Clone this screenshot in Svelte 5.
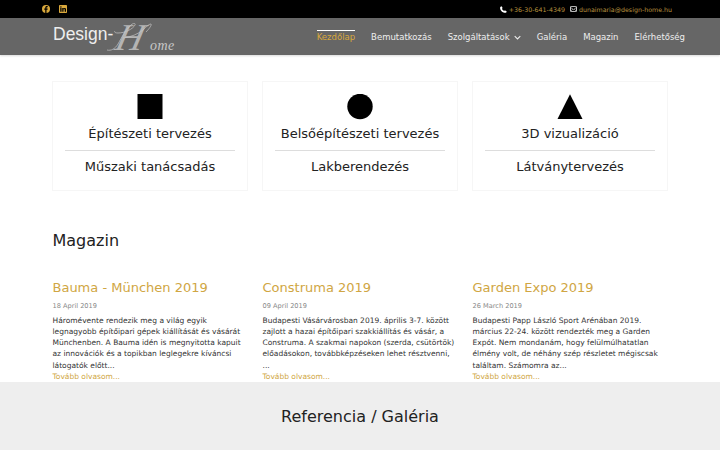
<script>
	const services = [
		{ shape: 'square', title: 'Építészeti tervezés', sub: 'Műszaki tanácsadás' },
		{ shape: 'circle', title: 'Belsőépítészeti tervezés', sub: 'Lakberendezés' },
		{ shape: 'triangle', title: '3D vizualizáció', sub: 'Látványtervezés' }
	];

	const articles = [
		{
			title: 'Bauma - München 2019',
			date: '18 April 2019',
			lines: [
				'Háromévente rendezik meg a világ egyik',
				'legnagyobb építőipari gépek kiállítását és vásárát',
				'Münchenben. A Bauma idén is megnyitotta kapuit',
				'az innovációk és a topikban leglegekre kíváncsi',
				'látogatók előtt...'
			]
		},
		{
			title: 'Construma 2019',
			date: '09 April 2019',
			lines: [
				'Budapesti Vásárvárosban 2019. április 3-7. között',
				'zajlott a hazai építőipari szakkiállítás és vásár, a',
				'Construma. A szakmai napokon (szerda, csütörtök)',
				'előadásokon, továbbképzéseken lehet résztvenni,',
				'...'
			]
		},
		{
			title: 'Garden Expo 2019',
			date: '26 March 2019',
			lines: [
				'Budapesti Papp László Sport Arénában 2019.',
				'március 22-24. között rendezték meg a Garden',
				'Expót. Nem mondanám, hogy felülmúlhatatlan',
				'élmény volt, de néhány szép részletet mégiscsak',
				'találtam. Számomra az...'
			]
		}
	];

	const menu = ['Bemutatkozás', 'Szolgáltatások', 'Galéria', 'Magazin', 'Elérhetőség'];
</script>

<div class="page">
	<div class="topbar">
		<div class="social">
			<svg class="soc" viewBox="0 0 16 16" width="8" height="8">
				<circle cx="8" cy="8" r="8" fill="#d9a83c" />
				<path d="M9 16V9.500h2l.4-2.500H9V5.600c0-.8.3-1.200 1.200-1.200h1.200V2.200C11 2.100 10.300 2 9.600 2 7.700 2 6.500 3.100 6.500 5.200V7H4.500v2.500h2V16z" fill="#000" />
			</svg>
			<svg class="soc" viewBox="0 0 16 16" width="8" height="8">
				<rect width="16" height="16" rx="1.500" fill="#d9a83c" />
				<path d="M2.500 6h2.600v7.500H2.500zM3.800 2.500a1.500 1.500 0 1 1 0 3 1.500 1.500 0 0 1 0-3zM6.500 6H9v1c.5-.8 1.400-1.200 2.400-1.200 2 0 2.600 1.300 2.600 3.300v4.400h-2.600V9.600c0-.9-.2-1.600-1.100-1.600-1 0-1.300.7-1.300 1.600v3.900H6.500z" fill="#000" />
			</svg>
		</div>
		<div class="contact">
			<svg viewBox="0 0 16 16" width="7" height="7">
				<path d="M3.600.6 6 4.800 4.500 6.400c.9 2.200 2.800 4.100 5 5l1.600-1.500 4.300 2.400c-.3 1.500-1.600 3-3.200 3C6 15.800.2 10 .2 3.800.2 2.200 2.100.9 3.600.6z" fill="#fff" />
			</svg>
			<span class="phone">+36-30-641-4349</span>
			<svg class="mail" viewBox="0 0 16 14" width="7" height="6">
				<rect x="1" y="1" width="14" height="12" rx="1.500" fill="none" stroke="#fff" stroke-width="1.800" />
				<path d="M1.500 3.500 8 8.500l6.500-5M1.500 12 6 7.500M14.500 12 10 7.500" fill="none" stroke="#fff" stroke-width="1.300" />
			</svg>
			<span>dunaimaria@design-home.hu</span>
		</div>
	</div>

	<header class="navbar">
		<div class="logo">
			<span class="logo-design">Design-</span>
			<span class="logo-home"><span class="cap">H</span>ome</span>
			<svg class="swash" viewBox="0 0 70 32" width="70" height="32">
				<path d="M1 28c4 1 8-1 11-6 4-7 8-15 13-19 2-2 5-2 4 0-2 4-10 8-17 8-3 0-4-1-3-2" fill="none" stroke="#c4c4c4" stroke-width="0.700" />
				<path d="M17 16c8-1 15-4 20-8 3-3 6-6 8-6 1 1-2 5-5 8" fill="none" stroke="#c4c4c4" stroke-width="0.700" />
			</svg>
		</div>
		<nav>
			<a class="active" href="#top">Kezdőlap</a>
			{#each menu as item}
				<a href="#top">
					{item}
					{#if item === 'Szolgáltatások'}
						<svg viewBox="0 0 10 6" width="7" height="5">
							<path d="M1 1l4 4 4-4" fill="none" stroke="#eee" stroke-width="1.500" />
						</svg>
					{/if}
				</a>
			{/each}
		</nav>
	</header>

	<section class="services">
		{#each services as s}
			<div class="card">
				<svg class="shape" viewBox="0 0 26 26" width="26" height="26">
					{#if s.shape === 'square'}
						<rect x="0.500" y="0" width="25" height="25" fill="#000" />
					{:else if s.shape === 'circle'}
						<circle cx="13" cy="12.500" r="12.700" fill="#000" />
					{:else}
						<path d="M13 0.300 25.500 25H0.500z" fill="#000" />
					{/if}
				</svg>
				<div class="card-title">{s.title}</div>
				<div class="card-sub">{s.sub}</div>
			</div>
		{/each}
	</section>

	<h2 class="magazin">Magazin</h2>

	<section class="articles">
		{#each articles as a}
			<article>
				<h3>{a.title}</h3>
				<div class="date">{a.date}</div>
				<p>
					{#each a.lines as line}
						<span>{line}</span>
					{/each}
				</p>
				<a class="more" href="#top">Tovább olvasom...</a>
			</article>
		{/each}
	</section>

	<section class="gallery">
		<h2>Referencia / Galéria</h2>
	</section>
</div>

<style>
	:global(body) {
		margin: 0;
		background: #fff;
	}

	.page {
		height: 450px;
		overflow: hidden;
		font-family: 'DejaVu Sans', sans-serif;
		color: #222;
	}

	.topbar {
		height: 18px;
		background: #000;
		display: flex;
		align-items: center;
		justify-content: space-between;
		padding: 0 48px 0 42px;
		font-size: 6.300px;
		color: #b8923f;
	}

	.social {
		display: flex;
		gap: 9px;
	}

	.soc {
		display: block;
	}

	.contact {
		display: flex;
		align-items: center;
		gap: 2px;
	}

	.mail {
		margin-left: 3px;
	}

	.navbar {
		height: 37px;
		background: #666;
		box-shadow: 0 1px 2px rgba(0, 0, 0, 0.15);
		display: flex;
		align-items: center;
		justify-content: space-between;
		padding: 0 35px 0 53px;
	}

	.logo {
		position: relative;
		width: 125px;
		height: 37px;
		white-space: nowrap;
	}

	.logo-design {
		position: absolute;
		left: 0;
		top: 6px;
		font-family: 'Liberation Sans', sans-serif;
		font-size: 17.500px;
		line-height: 21px;
		color: #eee;
	}

	.logo-home {
		position: absolute;
		left: 64px;
		top: 0;
		font-family: 'Liberation Serif', serif;
		font-style: italic;
		font-size: 14px;
		line-height: 38px;
		letter-spacing: 0.500px;
		color: #c8c8c8;
	}

	.cap {
		display: inline-block;
		font-size: 38px;
		color: #b4b4b4;
		transform: skewX(-14deg);
		margin-right: 5px;
	}

	.swash {
		position: absolute;
		left: 53px;
		top: 4px;
	}

	nav {
		display: flex;
		align-items: center;
		gap: 16px;
		font-size: 8.500px;
		line-height: 10px;
	}

	nav a {
		color: #eee;
		text-decoration: none;
		display: flex;
		align-items: center;
		gap: 4px;
		padding: 1px 0;
		border-top: 1px solid transparent;
	}

	nav a.active {
		color: #d9a83c;
		border-top-color: #fff;
	}

	.services {
		display: grid;
		grid-template-columns: repeat(3, 196px);
		gap: 14px;
		margin: 26px 52px 0;
	}

	.card {
		height: 110px;
		box-sizing: border-box;
		border: 1px solid #f6f6f6;
		padding: 12px 12px 0;
		display: flex;
		flex-direction: column;
		align-items: center;
		color: #222;
		font-size: 13px;
	}

	.shape {
		display: block;
	}

	.card-title {
		align-self: stretch;
		text-align: center;
		margin-top: 6px;
		line-height: 16px;
		padding-bottom: 8px;
		border-bottom: 1px solid #ddd;
	}

	.card-sub {
		margin-top: 8px;
		line-height: 16px;
	}

	.magazin {
		margin: 40px 52px 0 52.500px;
		font-size: 16px;
		font-weight: 400;
		line-height: 20px;
		color: #222;
	}

	.articles {
		display: grid;
		grid-template-columns: repeat(3, 196px);
		gap: 14px;
		margin: 28px 52px 0 52.500px;
	}

	article h3 {
		margin: 0;
		font-size: 13px;
		font-weight: 400;
		line-height: 18px;
		color: #d0a643;
		white-space: nowrap;
	}

	.date {
		margin-top: 3.500px;
		font-size: 6.600px;
		line-height: 10px;
		color: #888;
	}

	article p {
		margin: 4px 0 0;
		font-size: 7.500px;
		line-height: 11.250px;
		color: #333;
	}

	article p span {
		display: block;
		white-space: nowrap;
	}

	.more {
		display: block;
		font-size: 7.500px;
		line-height: 11.250px;
		color: #d0a643;
		text-decoration: none;
	}

	.gallery {
		height: 68px;
		background: #eee;
		text-align: center;
	}

	.gallery h2 {
		margin: 0;
		padding-top: 25px;
		font-size: 16px;
		font-weight: 400;
		line-height: 20px;
		color: #222;
	}
</style>
